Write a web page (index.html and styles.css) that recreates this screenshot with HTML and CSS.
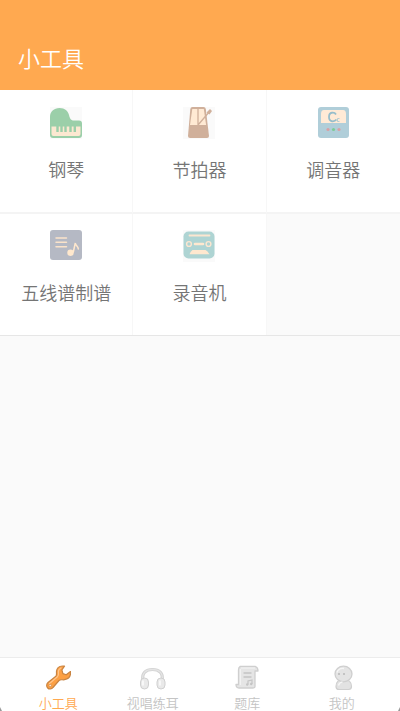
FILE: index.html
```html
<!DOCTYPE html>
<html lang="zh-CN">
<head>
<meta charset="utf-8">
<meta name="viewport" content="width=device-width, initial-scale=1">
<title>小工具</title>
<link rel="stylesheet" href="styles.css">
</head>
<body>
<div class="app">
  <header class="app-bar"><h1 class="title">小工具</h1></header>

  <main class="content">
    <div class="tools">
      <a class="tool" href="#piano">
        <svg class="tool-icon" viewBox="0 0 32 32" aria-hidden="true">
          <path fill="#fafafa" d="M0 0h32v32H0z"/>
          <path fill="#9bcfa9" d="M0 10C0 4.500 4 1 9.500 1c5.500 0 8.500 3 9.500 7 1 4 2 5.500 5 5.500h5q3 0 3 3V28q0 3-3 3H3q-3 0-3-3z"/>
          <path fill="#fce8d1" d="M1.500 19.500h29V27q0 2-2 2h-25q-2 0-2-2z"/>
          <path stroke="#9bcfa9" stroke-width="2.400" d="M7.500 19v6M11.500 19v6M15.500 19v6M20.500 19v6M24.800 19v6"/>
        </svg>
        <span class="tool-name">钢琴</span>
      </a>
      <a class="tool" href="#metronome">
        <svg class="tool-icon" viewBox="0 0 32 32" aria-hidden="true">
          <path fill="#fafafa" d="M0 0h32v32H0z"/>
          <path fill="#d0b09b" d="M9.500 0h11q2 0 2.300 2L26 29q0 2-2 2H7q-2 0-2-2L7.300 2q.2-2 2.200-2z"/>
          <path fill="#ffead4" d="M9.300 2h11.500l2.300 16H7z"/>
          <path fill="none" stroke="#d0b09b" stroke-width="1.300" d="M15 1v17M15 18L27 4"/>
          <path fill="#d0b09b" d="M27 2l2 2-2.500 3.500-3-2z"/>
        </svg>
        <span class="tool-name">节拍器</span>
      </a>
      <a class="tool" href="#tuner">
        <svg class="tool-icon" viewBox="0 0 32 32" aria-hidden="true">
          <rect width="31" height="31" x="1" rx="3" fill="#b0ced9"/>
          <path fill="#ffead6" d="M7 3h19q3 0 3 4v9H4V7q0-4 3-4z"/>
          <path fill="none" stroke="#96bdcb" stroke-width="1.800" d="M19 7.500C17.500 5 12 4.500 12 10s5.500 5 7.500 2.500"/>
          <path fill="none" stroke="#b4cdd2" d="M22.500 11.500h-2v3h2"/>
          <circle cx="11" cy="22.500" r="1.600" fill="#d99fa4"/>
          <circle cx="16.500" cy="22.500" r="1.600" fill="#7dcb96"/>
          <circle cx="22" cy="22.500" r="1.600" fill="#d99fa4"/>
        </svg>
        <span class="tool-name">调音器</span>
      </a>
      <a class="tool" href="#score">
        <svg class="tool-icon" viewBox="0 0 32 32" aria-hidden="true">
          <rect width="32" height="30" rx="3" fill="#b5b9c4"/>
          <path stroke="#fbe3ca" stroke-width="1.500" stroke-linecap="round" d="M6 8h10.500M6 12.300h10.500M6 16.700h10.500"/>
          <circle cx="20.500" cy="22.700" r="3.200" fill="#ffe8cd"/>
          <path fill="none" stroke="#ffe8cd" stroke-width="1.500" stroke-linecap="round" d="M23.300 22l2-9c.5 3 3 3 3 6"/>
        </svg>
        <span class="tool-name">五线谱制谱</span>
      </a>
      <a class="tool" href="#recorder">
        <svg class="tool-icon" viewBox="0 0 32 32" aria-hidden="true">
          <path fill="#fafafa" d="M0 0h32v32H0z"/>
          <rect width="31" height="27" y="1.500" x="0.500" rx="5" fill="#aed4d3"/>
          <path stroke="#fce6d0" stroke-width="1.800" stroke-linecap="round" d="M6.500 5.500h20"/>
          <path stroke="#ffe8cf" stroke-width="2.600" stroke-linecap="round" d="M12 14h8"/>
          <g fill="none" stroke="#fce6d0" stroke-width="1.400"><circle cx="6" cy="14" r="2.400"/><circle cx="25.500" cy="14" r="2.400"/></g>
          <path fill="#ffe8cf" d="M9.500 20h13q2 1 4 4.300h-20q1-3 3-4.300z"/>
        </svg>
        <span class="tool-name">录音机</span>
      </a>
    </div>
  </main>

  <nav class="tabs">
    <a class="tab tab-active" href="#tools">
      <svg class="tab-icon" viewBox="0 0 26 26" aria-hidden="true">
        <path fill="#fca044" stroke="#c98442" stroke-width="1.200" stroke-linejoin="round" d="M19.500 1.200c-3.800-.7-7 1-7.800 4-.7 2 .5 4-.8 6L3 17.500c-1.700 1.500-1.700 4-.3 5.500s4 1.300 5.300-.5l6-7c1.700-1.500 3.500-.3 5.500-.8 4-.8 6.500-3.500 6-8.200l-4.300 3.300-3.300-1.200-1-3.800z"/>
        <path fill="none" stroke="#ffc58c" stroke-width="1.200" stroke-linecap="round" d="M16 3c-2 1-2.800 2.500-2.600 4 .3 2 .2 3.500-1 4.800L4.500 18.500"/>
        <circle cx="5.200" cy="20.500" r="1.200" fill="#fff0df" stroke="#c98442" stroke-width=".7"/>
      </svg>
      <span>小工具</span>
    </a>
    <a class="tab" href="#training">
      <svg class="tab-icon" viewBox="0 0 26 26" aria-hidden="true">
        <path fill="none" stroke="#d2d2d2" stroke-width="3.200" d="M3 15C1.500 8 6 4.500 12.500 4.500S23.500 8 22 15"/>
        <path fill="none" stroke="#e4e4e4" stroke-width="1.300" d="M3 15C1.500 8 6 4.500 12.500 4.500S23.500 8 22 15"/>
        <g fill="#e9e9e9" stroke="#d0d0d0"><rect x="0.500" y="13" width="8" height="11" rx="4"/><rect x="17" y="13" width="8" height="11" rx="4"/></g>
        <path stroke="#fff" stroke-width="1.300" stroke-linecap="round" d="M3 16v4M20 16v4"/>
      </svg>
      <span>视唱练耳</span>
    </a>
    <a class="tab" href="#questions">
      <svg class="tab-icon" viewBox="0 0 26 26" aria-hidden="true">
        <path fill="#e5e5e5" stroke="#cfcfcf" stroke-width="1.300" stroke-linejoin="round" d="M6 1.500h15.500Q24 2.500 24 6h-3v15.500q0 1.500-2 1.500H5q-3 0-3-3.500h2.500V5q0-2.500 1.500-3.500z"/>
        <path fill="none" stroke="#f5f5f5" d="M6.300 4v16M7 3h14"/>
        <path stroke="#c4c4c4" stroke-width="1.300" d="M9.500 8h8M9.500 12h8"/>
        <path fill="none" stroke="#c4c4c4" stroke-width="1.200" d="M14 19.500V16l4-1v4"/>
        <circle cx="13.200" cy="19.500" r="1.200" fill="#c4c4c4"/><circle cx="17.200" cy="19" r="1.200" fill="#c4c4c4"/>
      </svg>
      <span>题库</span>
    </a>
    <a class="tab" href="#mine">
      <svg class="tab-icon" viewBox="0 0 26 26" aria-hidden="true">
        <path fill="#e2e2e2" stroke="#cfcfcf" stroke-width="1.200" d="M7 21.500c0-4 2-7 7.500-7s8 3 8 7q0 3-3 3H10q-3 0-3-3z"/>
        <ellipse cx="14.500" cy="9" rx="8.500" ry="7.800" fill="#e4e4e4" stroke="#cfcfcf" stroke-width="1.300"/>
        <path fill="none" stroke="#f6f6f6" stroke-width="1.300" d="M8 7.500c1-3 4-4.500 7-4M9.500 20.500c.5-2 2-3.500 4-3.700"/>
        <circle cx="10" cy="9" r="1" fill="#b8b8b8"/><circle cx="15" cy="9" r="1" fill="#b8b8b8"/>
      </svg>
      <span>我的</span>
    </a>
  </nav>
</div>
</body>
</html>
```
FILE: styles.css
```css
* {
  box-sizing: border-box;
}

body {
  margin: 0;
  background: #fafafa;
  font-family: "Noto Sans CJK SC", sans-serif;
  font-weight: 350;
}

.app {
  position: relative;
  display: flex;
  flex-direction: column;
  min-height: 100vh;
  overflow: hidden;
}

/* screen corners */
.app::before,
.app::after {
  content: "";
  position: absolute;
  bottom: 0;
  width: 2px;
  height: 4px;
  background: #999;
}

.app::before {
  left: 0;
  clip-path: polygon(0 0, 100% 100%, 0 100%);
}

.app::after {
  right: 0;
  clip-path: polygon(100% 0, 100% 100%, 0 100%);
}

.app-bar {
  padding: 41px 18px 17px;
  background: #ffa950;
}

.title {
  margin: 0;
  color: #fff;
  font-size: 22px;
  font-weight: 350;
  line-height: 32px;
}

.content {
  flex: 1;
}

.tools {
  display: grid;
  grid-template-columns: repeat(3, 1fr);
  border-bottom: 1px solid #e6e6e6;
}

.tool {
  display: flex;
  flex-direction: column;
  align-items: center;
  gap: 17px;
  padding: 16px 0 30px;
  border-right: 1px solid #f7f7f7;
  background: #fff;
  color: #757575;
  text-decoration: none;
}

.tool:nth-child(3n) {
  border-right: 0;
}

.tool:nth-child(-n + 3) {
  padding-top: 17px;
  border-bottom: 2px solid #f4f4f4;
}

.tool-icon {
  width: 32px;
  height: 32px;
}

.tool-name {
  font-size: 18px;
  line-height: 26px;
}

.tabs {
  display: flex;
  padding: 7px 11px 0;
  border-top: 1px solid #ececec;
  background: #fff;
}

.tab {
  display: flex;
  flex: 1;
  flex-direction: column;
  align-items: center;
  gap: 3px;
  color: #c4c4c4;
  font-size: 13px;
  line-height: 17px;
  text-decoration: none;
}

.tab-active {
  color: #ffa950;
}

.tab-icon {
  width: 26px;
  height: 26px;
}
```
